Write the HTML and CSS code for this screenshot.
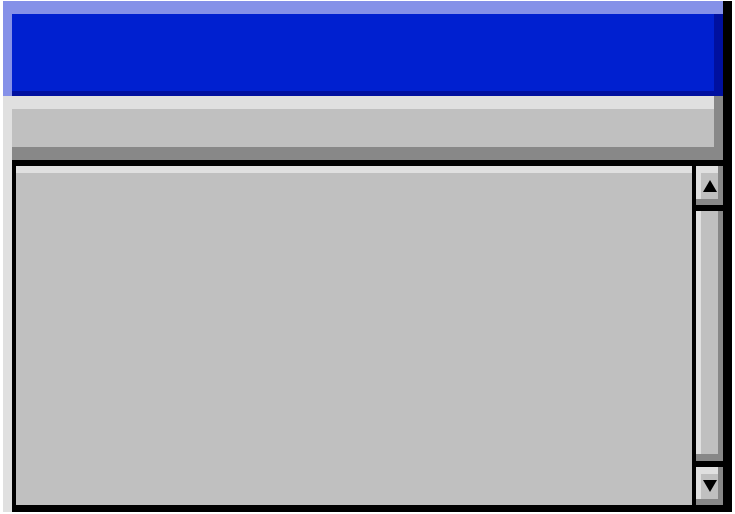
FILE: index.html
```html
<!DOCTYPE html>
<html lang="en">
<head>
    <meta charset="UTF-8">
    <meta name="viewport" content="width=device-width, initial-scale=1.0">
    <title>Window</title>
    <link rel="stylesheet" href="styles.css">
</head>
<body>
    <div class="window">
        <div class="titlebar"></div>
        <div class="toolbar"></div>
        <div class="body">
            <div class="frame">
                <div class="panel"></div>
                <div class="scrollbar">
                    <div class="scroll-btn">
                        <svg width="14" height="12" viewBox="0 0 14 12"><polygon points="7,0 14,12 0,12" fill="#000"/></svg>
                    </div>
                    <div class="scroll-track"></div>
                    <div class="scroll-btn scroll-btn-down">
                        <svg width="14" height="12" viewBox="0 0 14 12"><polygon points="0,0 14,0 7,12" fill="#000"/></svg>
                    </div>
                </div>
            </div>
        </div>
    </div>
</body>
</html>
```

FILE: styles.css
```css
body {
    margin: 0;
    background-color: #fff;
}
.window {
    width: 720px;
    height: 511px;
    margin: 1px 0 0 3px;
    border-right: 9px solid #000;
    display: flex;
    flex-direction: column;
}
.titlebar {
    flex: none;
    height: 95px;
    background: #0020d0;
    box-shadow: inset 0 13px #8591e8, inset 9px 0 #8591e8, inset -9px 0 #0010a0, inset 0 -5px #0010a0;
}
.toolbar {
    flex: none;
    height: 64px;
    background: #c0c0c0;
    box-shadow: inset 9px 0 #e0e0e0, inset -9px 0 #888, inset 0 13px #e0e0e0, inset 0 -13px #888;
}
.body {
    flex: 1;
    display: flex;
    padding-left: 9px;
    background: #e0e0e0;
}
.frame {
    flex: 1;
    display: flex;
    gap: 4px;
    padding: 6px 0 7px 4px;
    background: #000;
}
.panel {
    flex: 1;
    background: #c0c0c0;
    box-shadow: inset 0 7px #e0e0e0;
}
.scrollbar {
    width: 27px;
    display: flex;
    flex-direction: column;
    gap: 6px;
}
.scroll-btn {
    flex: none;
    height: 39px;
    box-sizing: border-box;
    padding: 7px 5px 6px 5px;
    display: flex;
    align-items: center;
    justify-content: center;
    background: #c0c0c0;
    box-shadow: inset 0 -6px #888, inset -5px 0 #888, inset 0 7px #e0e0e0, inset 5px 0 #e0e0e0;
}
.scroll-btn-down {
    height: 38px;
    padding-top: 6px;
}
.scroll-btn svg {
    display: block;
}
.scroll-track {
    flex: 1;
    background: #c0c0c0;
    box-shadow: inset 0 -7px #888, inset -5px 0 #888, inset 5px 0 #e0e0e0;
}
```
